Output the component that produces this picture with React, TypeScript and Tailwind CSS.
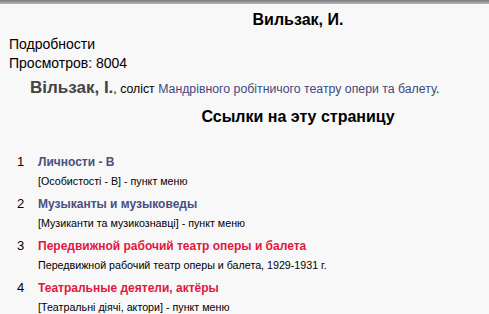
const LINKS = [
  { n: 1, title: "Личности - В", note: "[Особистості - В] - пункт меню", red: false },
  { n: 2, title: "Музыканты и музыковеды", note: "[Музиканти та музикознавці] - пункт меню", red: false },
  { n: 3, title: "Передвижной рабочий театр оперы и балета", note: "Передвижной рабочий театр оперы и балета, 1929-1931 г.", red: true },
  { n: 4, title: "Театральные деятели, актёры", note: "[Театральні діячі, актори] - пункт меню", red: true },
];

export default function App() {
  return (
    <div className="w-[489px] h-[314px] overflow-hidden bg-[#f8f8f8] font-['Liberation_Sans',Arial,sans-serif] text-black">
      <div className="h-[4px] bg-gradient-to-b from-[#7a7a7a] to-[#b8b8b8]" />

      <h1 className="pl-[107px] text-center text-[16px] font-bold leading-[20px] mt-[6px]">Вильзак, И.</h1>

      <div className="px-[9px] mt-[5px] text-[14px] leading-[19px]">
        <p>Подробности</p>
        <p>Просмотров: 8004</p>
      </div>

      <p className="pl-[30px] mt-[5px] text-[12.3px] leading-[20px]">
        <span className="text-[17px] font-bold text-[#444]">Вільзак, І.</span>, соліст{" "}
        <span className="text-[#3e4a7c]">Мандрівного робітничого театру опери та балету</span>.
      </p>

      <h2 className="pl-[107px] text-center text-[16px] font-bold leading-[22px] mt-[7px]">Ссылки на эту страницу</h2>

      <ul className="mt-[24px]">
        {LINKS.map((l) => (
          <li key={l.n} className="flex h-[42px]">
            <span className="w-[38px] pl-[17px] text-[13px] leading-[20px]">{l.n}</span>
            <div>
              <p className={`text-[12px] font-bold leading-[20px] ${l.red ? "text-[#e3173e]" : "text-[#4a4f7e]"}`}>{l.title}</p>
              <p className="text-[10.7px] leading-[18px]">{l.note}</p>
            </div>
          </li>
        ))}
      </ul>
    </div>
  );
}
